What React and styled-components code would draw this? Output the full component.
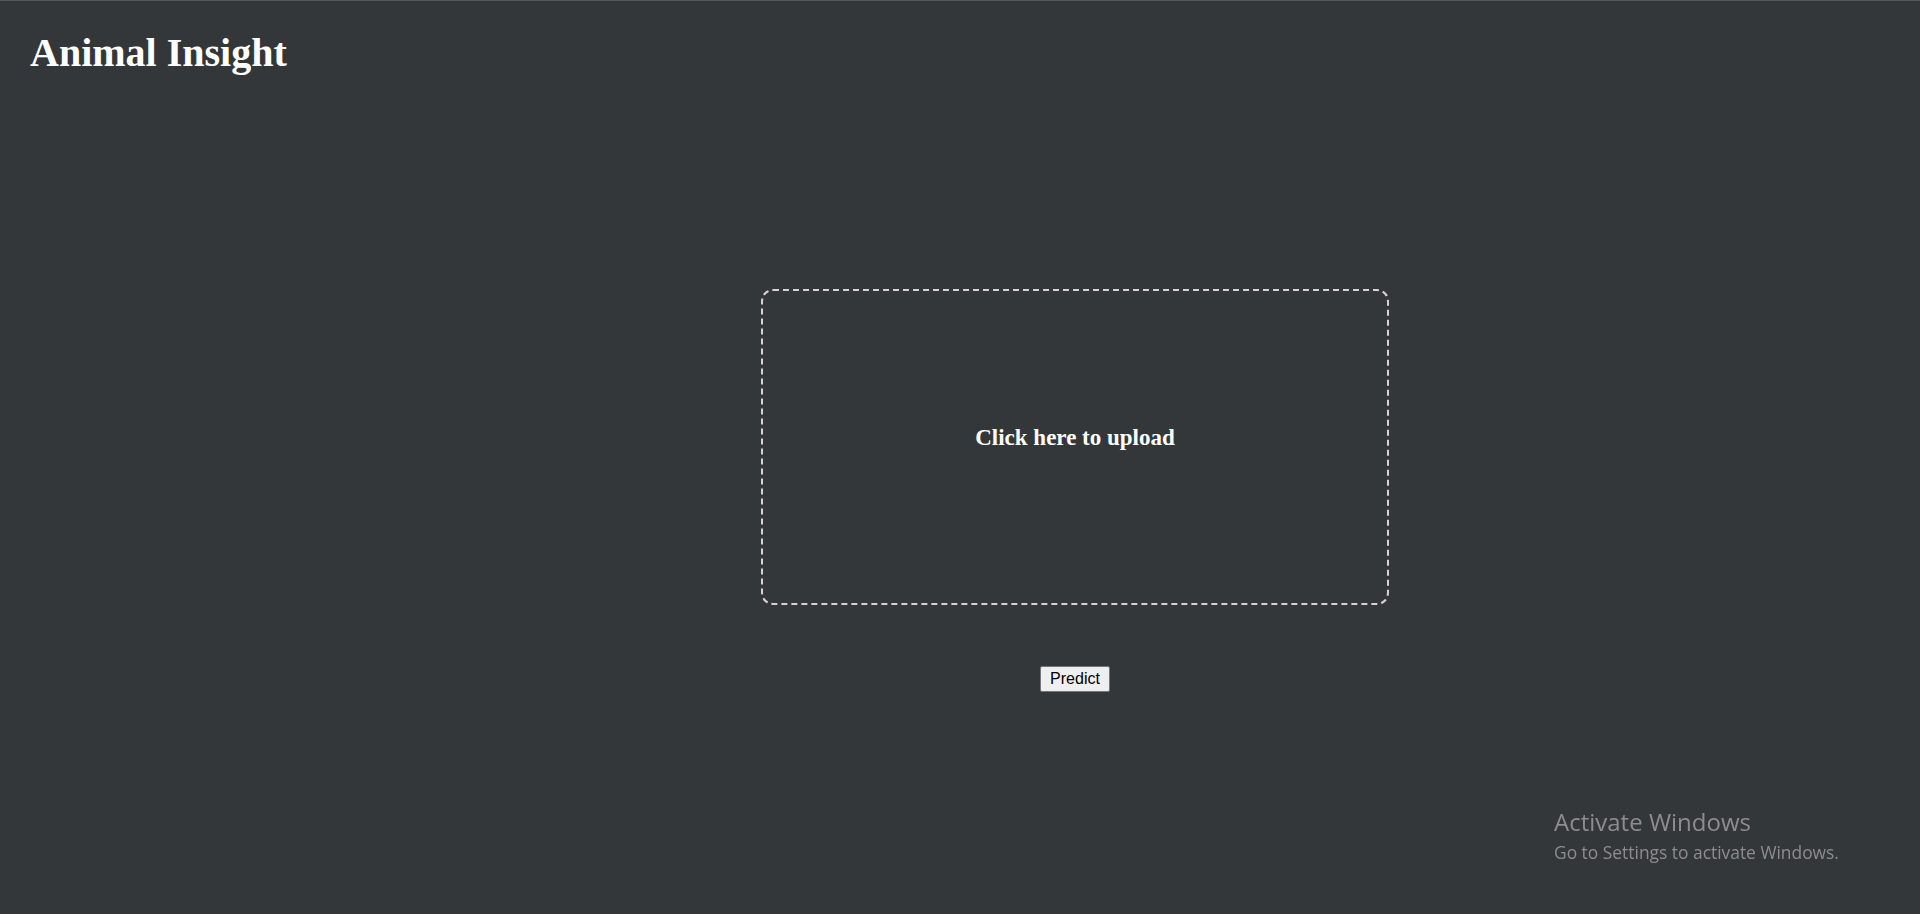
import styled, { createGlobalStyle } from "styled-components";

const GlobalStyle = createGlobalStyle`
  html, body {
    margin: 0;
    padding: 0;
    background-color: #343739;
  }
  body {
    border-top: 1px solid #55585a;
    font-family: "Liberation Serif", "Times New Roman", serif;
    color: #ffffff;
  }
`;

export default function App() {
  return (
    <>
      <GlobalStyle />
      <STPage>
        <STHeader>
          <STTitle>Animal Insight</STTitle>
        </STHeader>
        <STStage>
          <STUploadBox>
            <STUploadLabel>Click here to upload</STUploadLabel>
          </STUploadBox>
          <STPredictButton type="button">Predict</STPredictButton>
        </STStage>
      </STPage>
      <STWatermark>
        <STWatermarkTitle>Activate Windows</STWatermarkTitle>
        <STWatermarkText>Go to Settings to activate Windows.</STWatermarkText>
      </STWatermark>
    </>
  );
}

const STPage = styled.div`
  display: flex;
  flex-direction: column;
`;

const STHeader = styled.header`
  padding: 28px 30px 0;
`;

const STTitle = styled.h1`
  margin: 0;
  font-size: 40px;
  font-weight: bold;
  line-height: normal;
  color: #ffffff;
`;

const STStage = styled.main`
  display: flex;
  flex-direction: column;
  align-items: center;
  padding-top: 213px;
  padding-left: 230px;
  gap: 61px;
`;

const STUploadBox = styled.div`
  box-sizing: border-box;
  width: 628px;
  height: 316px;
  border: 2px dashed #d4d4d4;
  border-radius: 12px;
  display: flex;
  align-items: center;
  justify-content: center;
  padding-bottom: 18px;
  cursor: pointer;
`;

const STUploadLabel = styled.h3`
  margin: 0;
  font-size: 23px;
  font-weight: bold;
  color: #ffffff;
`;

const STPredictButton = styled.button`
  box-sizing: border-box;
  width: 70px;
  height: 26px;
  padding: 0;
  font-family: "Liberation Sans", Arial, sans-serif;
  font-size: 16px;
  color: #000000;
  background-color: #efefef;
  border: 1px solid #767676;
  border-radius: 2px;
  cursor: pointer;
`;

const STWatermark = styled.div`
  position: fixed;
  left: 1554px;
  top: 806px;
  font-family: "Open Sans", "Noto Sans", sans-serif;
  color: #8b8d8f;
  pointer-events: none;
`;

const STWatermarkTitle = styled.div`
  font-size: 24px;
  line-height: 32px;
`;

const STWatermarkText = styled.div`
  margin-top: 2px;
  font-size: 17.4px;
  line-height: 24px;
`;
